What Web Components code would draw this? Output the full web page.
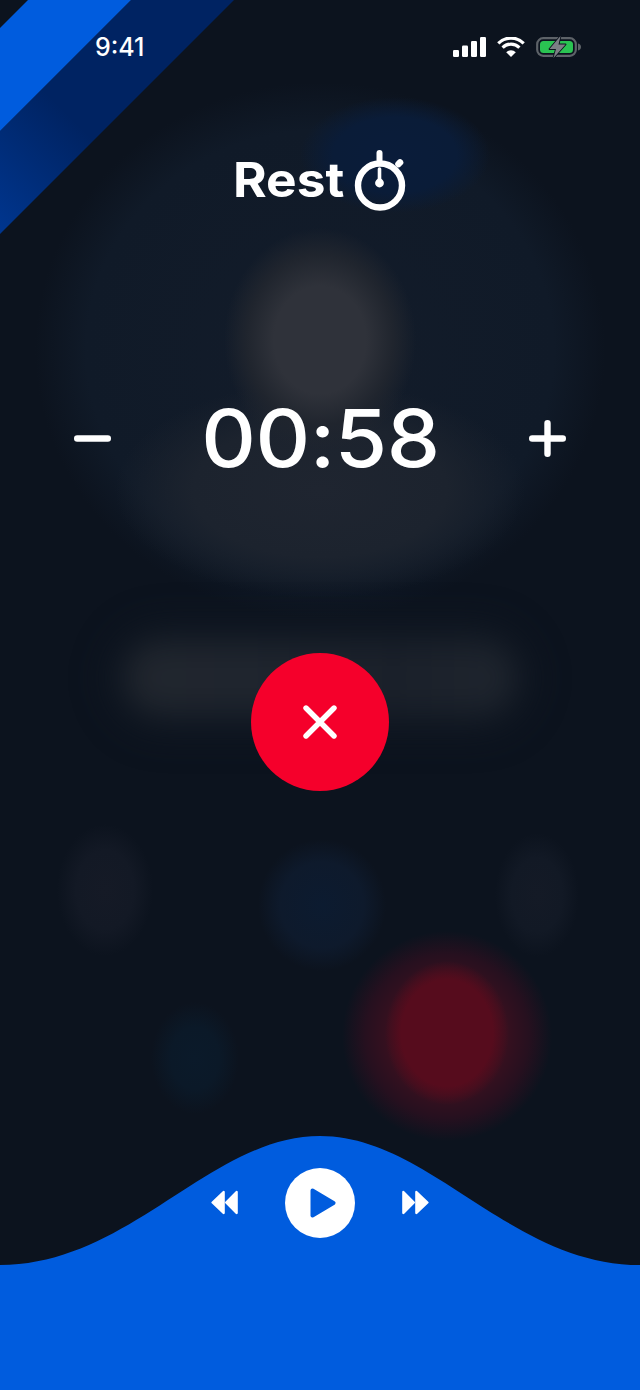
<!DOCTYPE html>
<html>
<head>
<meta charset="utf-8">
<title>Rest</title>
<style>
  html, body { margin: 0; padding: 0; background: #0c131e; }
  body { font-family: "Inter", "Liberation Sans", sans-serif; color: #fff; }
</style>
</head>
<body>
<rest-screen>
  <status-bar>9:41</status-bar>
  <rest-title>Rest</rest-title>
  <timer-row>00:58</timer-row>
  <cancel-button></cancel-button>
  <player-bar></player-bar>
</rest-screen>

<script>
class RestScreen extends HTMLElement {
  constructor() {
    super();
    this.attachShadow({ mode: 'open' });
    this.shadowRoot.innerHTML = `
      <style>
        :host {
          display: flex;
          flex-direction: column;
          position: relative;
          width: 640px;
          height: 1390px;
          overflow: hidden;
          background: #0c131e;
        }
        /* blurred photo behind the content, painted as soft blobs */
        #backdrop {
          position: absolute;
          inset: 0;
          background:
            radial-gradient(ellipse 62px 72px at 447px 1033px, #560c1d 0, #560c1d 74%, rgba(86,12,29,0) 100%),
            radial-gradient(ellipse 105px 105px at 447px 1036px, #38101f 0, #38101f 55%, #26101f 78%, rgba(12,19,30,0) 100%),
            radial-gradient(ellipse 44px 56px at 195px 1058px, #0b1a2a 0, #0b1928 55%, rgba(12,19,30,0) 100%),
            radial-gradient(ellipse 48px 66px at 105px 890px, #151a26 0, #131925 60%, rgba(12,19,30,0) 100%),
            radial-gradient(ellipse 64px 66px at 322px 905px, #0c1b30 0, #0e1a2c 65%, rgba(12,19,30,0) 100%),
            radial-gradient(ellipse 42px 62px at 537px 895px, #141a26 0, #121925 60%, rgba(12,19,30,0) 100%),
            radial-gradient(ellipse 96px 112px at 320px 340px, #2f323a 0, #2f323a 48%, #20252e 76%, rgba(20,28,40,0) 100%),
            radial-gradient(ellipse 205px 108px at 320px 490px, #1f2530 0, #1c232e 62%, rgba(18,26,38,0) 100%),
            radial-gradient(ellipse 95px 58px at 395px 155px, #0a1c3a 0, #0a1c38 65%, rgba(14,24,38,0) 100%),
            radial-gradient(ellipse 285px 268px at 320px 350px, #131c2a 0, #101a28 82%, rgba(12,19,30,0) 100%);
        }
        /* long soft bar behind the cancel button */
        #bar {
          position: absolute;
          left: 128px;
          top: 644px;
          width: 384px;
          height: 68px;
          border-radius: 34px;
          background: linear-gradient(90deg, #21262e 0, #1f252e 30%, #1a202a 70%, #1f252e 100%);
          box-shadow: 0 0 22px 16px #141b25;
          filter: blur(14px);
        }
        #stripes {
          position: absolute;
          left: 0;
          top: 0;
        }
        ::slotted(*) { position: relative; }
        ::slotted(player-bar) { margin-top: auto; }
      </style>
      <div id="backdrop"></div>
      <div id="bar"></div>
      <svg id="stripes" width="240" height="240" viewBox="0 0 240 240">
        <defs>
          <linearGradient id="band" x1="1" y1="0" x2="0" y2="1">
            <stop offset="0" stop-color="#002362"/>
            <stop offset="0.6" stop-color="#002362"/>
            <stop offset="1" stop-color="#00368f"/>
          </linearGradient>
        </defs>
        <polygon points="131,0 234,0 0,234 0,131" fill="url(#band)"/>
        <polygon points="28,0 131,0 0,131 0,28" fill="#005cde"/>
      </svg>
      <slot></slot>
    `;
  }
}

class StatusBar extends HTMLElement {
  constructor() {
    super();
    this.attachShadow({ mode: 'open' });
    this.shadowRoot.innerHTML = `
      <style>
        :host {
          display: flex;
          align-items: center;
          justify-content: space-between;
          box-sizing: border-box;
          height: 94px;
          padding: 0 59px 0 95px;
          font: 500 25px "Inter", "Liberation Sans", sans-serif;
          color: #fff;
        }
        #icons {
          display: flex;
          align-items: center;
          gap: 11px;
        }
        svg { display: block; }
      </style>
      <div id="time"><slot></slot></div>
      <div id="icons">
        <svg width="33" height="20" viewBox="0 0 33 20" fill="#fff">
          <rect x="0" y="13" width="6" height="7" rx="1.2"/>
          <rect x="9" y="8.5" width="6" height="11.5" rx="1.2"/>
          <rect x="18" y="4" width="6" height="16" rx="1.2"/>
          <rect x="27" y="0" width="6" height="20" rx="1.2"/>
        </svg>
        <svg width="28" height="20" viewBox="0 0 28 20">
          <path d="M14 20 L9.2 15.2 A6.8 6.8 0 0 1 18.8 15.2 Z" fill="#fff"/>
          <path d="M5.6 10.6 A12 12 0 0 1 22.4 10.6" fill="none" stroke="#fff" stroke-width="3.2"/>
          <path d="M1.3 6.3 A18 18 0 0 1 26.7 6.3" fill="none" stroke="#fff" stroke-width="3.2"/>
        </svg>
        <svg width="45" height="24" viewBox="0 0 45 24">
          <rect x="1.2" y="3.2" width="38.6" height="17.6" rx="6" fill="none" stroke="#5d6268" stroke-width="2.2"/>
          <rect x="4" y="6" width="33" height="12" rx="3.5" fill="#2ac352"/>
          <path d="M42 8.5 C44 9 45 10.4 45 12 C45 13.6 44 15 42 15.5 Z" fill="#5d6268"/>
          <path d="M24.5 1 L13.5 14 H20 L17.5 23 L29.5 9.5 H22.5 Z" fill="#7c7f85" stroke="#0c131e" stroke-width="1.8" stroke-linejoin="round" paint-order="stroke"/>
        </svg>
      </div>
    `;
  }
}

class RestTitle extends HTMLElement {
  constructor() {
    super();
    this.attachShadow({ mode: 'open' });
    this.shadowRoot.innerHTML = `
      <style>
        :host {
          display: flex;
          align-items: center;
          justify-content: center;
          gap: 16px;
          height: 60px;
          margin-top: 56px;
          font: 700 48px/60px "Inter", "Liberation Sans", sans-serif;
          color: #fff;
        }
        span {
          transform: scaleX(1.07);
          transform-origin: left center;
        }
        svg { display: block; overflow: visible; }
      </style>
      <span><slot></slot></span>
      <svg width="54" height="60" viewBox="0 0 54 60" fill="none" stroke="#fff">
        <circle cx="27" cy="35.5" r="22" stroke-width="6.4"/>
        <path d="M26.5 3 V10" stroke-width="6" stroke-linecap="round"/>
        <path d="M47 12.5 L45.5 14" stroke-width="6.6" stroke-linecap="round"/>
        <path d="M26.5 19 V31" stroke-width="3.6" stroke-linecap="round"/>
        <circle cx="26.5" cy="33" r="4.4" fill="#fff" stroke="none"/>
      </svg>
    `;
  }
}

class TimerRow extends HTMLElement {
  constructor() {
    super();
    this.attachShadow({ mode: 'open' });
    this.shadowRoot.innerHTML = `
      <style>
        :host {
          display: flex;
          align-items: center;
          justify-content: space-between;
          box-sizing: border-box;
          height: 100px;
          margin-top: 178px;
          padding: 0 74px;
          color: #fff;
        }
        #time {
          font: 550 80px/100px "Inter", "Liberation Sans", sans-serif;
          letter-spacing: -0.5px;
          transform: scaleX(1.06);
        }
        svg { display: block; }
      </style>
      <svg width="37" height="37" viewBox="0 0 37 37" stroke="#fff" stroke-width="6.4" stroke-linecap="round">
        <path d="M3.2 18.5 H33.8"/>
      </svg>
      <div id="time"><slot></slot></div>
      <svg width="37" height="37" viewBox="0 0 37 37" stroke="#fff" stroke-width="6.4" stroke-linecap="round">
        <path d="M3.2 18.5 H33.8 M18.5 3.2 V33.8"/>
      </svg>
    `;
  }
}

class CancelButton extends HTMLElement {
  constructor() {
    super();
    this.attachShadow({ mode: 'open' });
    this.shadowRoot.innerHTML = `
      <style>
        :host {
          display: flex;
          align-items: center;
          justify-content: center;
          align-self: center;
          width: 138px;
          height: 138px;
          margin-top: 165px;
          border-radius: 50%;
          background: #f5002b;
        }
        svg { display: block; }
      </style>
      <svg width="34" height="34" viewBox="0 0 34 34" stroke="#fff" stroke-width="5.4" stroke-linecap="round">
        <path d="M3 3 L31 31 M31 3 L3 31"/>
      </svg>
    `;
  }
}

class PlayerBar extends HTMLElement {
  constructor() {
    super();
    this.attachShadow({ mode: 'open' });
    this.shadowRoot.innerHTML = `
      <style>
        :host {
          display: flex;
          align-items: flex-start;
          justify-content: center;
          gap: 47px;
          box-sizing: border-box;
          height: 254px;
          padding-top: 32px;
          background: #005cde;
          clip-path: path('M0 129 C130 129 210 0 320 0 C430 0 510 129 640 129 V254 H0 Z');
        }
        #play {
          display: flex;
          align-items: center;
          justify-content: center;
          width: 70px;
          height: 70px;
          border-radius: 50%;
          background: #fff;
        }
        .skip { margin-top: 22px; }
        svg { display: block; }
      </style>
      <svg class="skip" width="27" height="25" viewBox="0 0 27 25" fill="#fff" stroke="#fff" stroke-width="2.4" stroke-linejoin="round">
        <path d="M12.6 2 L1.6 12.5 L12.6 23 Z"/>
        <path d="M25.6 2 L15.2 12.5 L25.6 23 Z"/>
      </svg>
      <div id="play">
        <svg width="26" height="30" viewBox="0 0 26 30" fill="#005cde" stroke="#005cde" stroke-width="4" stroke-linejoin="round" style="margin-left:5px">
          <path d="M2.5 2.5 L23.5 15 L2.5 27.5 Z"/>
        </svg>
      </div>
      <svg class="skip" width="27" height="25" viewBox="0 0 27 25" fill="#fff" stroke="#fff" stroke-width="2.4" stroke-linejoin="round">
        <path d="M1.4 2 L11.8 12.5 L1.4 23 Z"/>
        <path d="M14.4 2 L25.4 12.5 L14.4 23 Z"/>
      </svg>
    `;
  }
}

customElements.define('rest-screen', RestScreen);
customElements.define('status-bar', StatusBar);
customElements.define('rest-title', RestTitle);
customElements.define('timer-row', TimerRow);
customElements.define('cancel-button', CancelButton);
customElements.define('player-bar', PlayerBar);
</script>
</body>
</html>
